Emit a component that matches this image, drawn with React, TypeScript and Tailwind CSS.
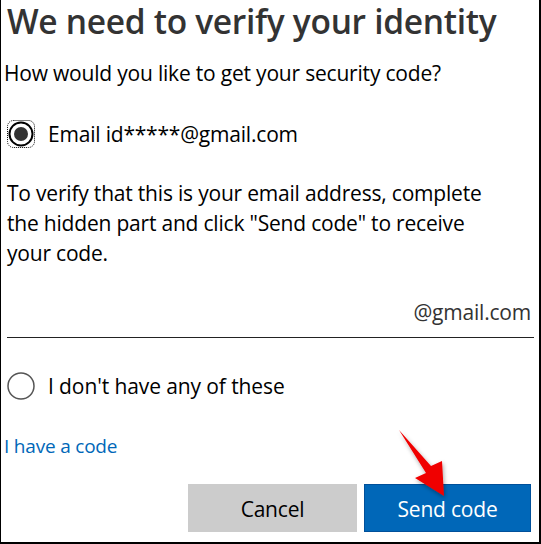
import React from "react";

function RadioSelected() {
  return (
    <svg width="30" height="30" viewBox="0 0 30 30" className="shrink-0">
      <rect x="1.5" y="1.5" width="27" height="27" rx="6" fill="none" stroke="#000" strokeWidth="1" strokeDasharray="1 1" />
      <circle cx="15" cy="15" r="11.5" fill="none" stroke="#000" strokeWidth="2" />
      <circle cx="15" cy="15" r="7" fill="#333" />
    </svg>
  );
}

function RadioEmpty() {
  return (
    <svg width="30" height="30" viewBox="0 0 30 30" className="shrink-0">
      <circle cx="15" cy="15" r="13" fill="none" stroke="#555" strokeWidth="1.5" />
    </svg>
  );
}

export default function App() {
  return (
    <div
      className="relative w-[541px] h-[544px] bg-white border-l border-r-2 border-b-2 border-black overflow-hidden text-black"
      style={{ fontFamily: '"Open Sans", "Noto Sans", sans-serif' }}
    >
      <h1 className="pl-[6px] text-[33.5px] leading-[42px] font-semibold text-[#333] tracking-[-0.3px] whitespace-nowrap">
        We need to verify your identity
      </h1>
      <p className="pl-[3px] mt-[16px] text-[21px] leading-[30px] whitespace-nowrap tracking-[-0.2px]">
        How would you like to get your security code?
      </p>
      <div className="flex items-center gap-[12px] pl-[5px] mt-[31px] h-[30px]">
        <RadioSelected />
        <span className="text-[21px] leading-[30px] whitespace-nowrap tracking-[-0.2px]">Email id*****@gmail.com</span>
      </div>
      <p className="pl-[6px] mt-[29px] text-[21px] leading-[30px] w-[505px] tracking-[-0.2px]">
        To verify that this is your email address, complete the hidden part and click "Send code" to receive your code.
      </p>
      <div className="mt-[29px] pr-[8px] flex justify-end text-[21px] leading-[30px] text-[#333] tracking-[-0.2px]">@gmail.com</div>
      <div className="ml-[6px] mr-[5px] mt-[10px] h-px bg-[#222]" />
      <div className="flex items-center gap-[12px] pl-[5px] mt-[33px] h-[30px]">
        <RadioEmpty />
        <span className="text-[21px] leading-[30px] whitespace-nowrap tracking-[-0.1px]">I don't have any of these</span>
      </div>
      <div className="pl-[3px] mt-[30px] text-[19px] leading-[30px] text-[#0067b8] tracking-[-0.2px]">I have a code</div>
      <div className="flex justify-end gap-[7px] pr-[8px] mt-[23px]">
        <button className="w-[169px] h-[48px] pt-[4px] bg-[#cccccc] text-[21px] text-black tracking-[-0.2px]">Cancel</button>
        <button className="w-[167px] h-[48px] pt-[4px] bg-[#0067b8] border border-[#00509a] text-[21px] text-white tracking-[-0.2px]">Send code</button>
      </div>
      <svg className="absolute left-0 top-0 pointer-events-none" width="541" height="544" viewBox="0 0 541 544">
        <defs>
          <filter id="sh" x="-50%" y="-50%" width="200%" height="200%">
            <feDropShadow dx="1" dy="2" stdDeviation="2" floodColor="#000" floodOpacity="0.35" />
          </filter>
        </defs>
        <polygon
          points="398,430 430,466 441,461 443,496 414,478 425,473"
          fill="#f00000"
          filter="url(#sh)"
        />
      </svg>
    </div>
  );
}
